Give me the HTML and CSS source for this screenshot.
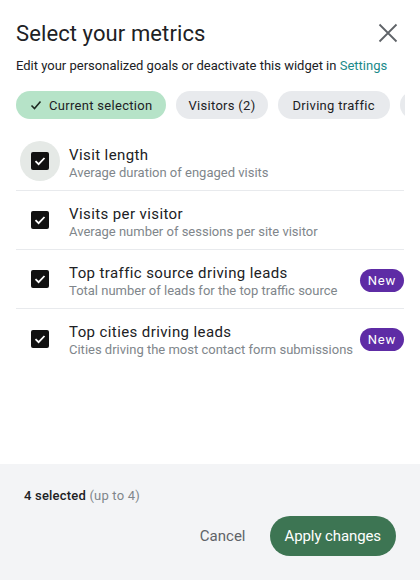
FILE: index.html
```html
<!DOCTYPE html>
<html>
<head>
<meta charset="utf-8">
<link rel="stylesheet" href="styles.css">
</head>
<body>
<div class="dialog">
  <div class="content">
    <div class="header">
      <h1 class="title">Select your metrics</h1>
      <button class="close" aria-label="Close">
        <svg width="24" height="24" viewBox="0 0 24 24"><path d="M3.5 3.5L20.5 20.5M20.5 3.5L3.5 20.5" stroke="#5f6368" stroke-width="1.8" fill="none"/></svg>
      </button>
    </div>
    <p class="subtitle">Edit your personalized goals or deactivate this widget in <a class="link">Settings</a></p>
    <div class="chips">
      <span class="chip chip-active"><svg width="14" height="14" viewBox="0 0 14 14"><path d="M2.5 7.5L5.5 10.5L11.5 3.5" stroke="#1f2a22" stroke-width="1.6" fill="none"/></svg>Current selection</span>
      <span class="chip chip-visitors">Visitors (2)</span>
      <span class="chip chip-traffic">Driving traffic</span>
      <span class="chip chip-more"></span>
    </div>
    <ul class="list">
      <li class="row">
        <span class="cb-wrap focused"><span class="cb"><svg width="14" height="14" viewBox="0 0 14 14"><path d="M2.5 7.2L5.6 10.2L11.5 4" stroke="#fff" stroke-width="1.8" fill="none"/></svg></span></span>
        <div class="text"><div class="name">Visit length</div><div class="desc">Average duration of engaged visits</div></div>
      </li>
      <li class="row">
        <span class="cb-wrap"><span class="cb"><svg width="14" height="14" viewBox="0 0 14 14"><path d="M2.5 7.2L5.6 10.2L11.5 4" stroke="#fff" stroke-width="1.8" fill="none"/></svg></span></span>
        <div class="text"><div class="name">Visits per visitor</div><div class="desc">Average number of sessions per site visitor</div></div>
      </li>
      <li class="row">
        <span class="cb-wrap"><span class="cb"><svg width="14" height="14" viewBox="0 0 14 14"><path d="M2.5 7.2L5.6 10.2L11.5 4" stroke="#fff" stroke-width="1.8" fill="none"/></svg></span></span>
        <div class="text"><div class="name">Top traffic source driving leads</div><div class="desc">Total number of leads for the top traffic source</div></div>
        <span class="badge">New</span>
      </li>
      <li class="row">
        <span class="cb-wrap"><span class="cb"><svg width="14" height="14" viewBox="0 0 14 14"><path d="M2.5 7.2L5.6 10.2L11.5 4" stroke="#fff" stroke-width="1.8" fill="none"/></svg></span></span>
        <div class="text"><div class="name">Top cities driving leads</div><div class="desc">Cities driving the most contact form submissions</div></div>
        <span class="badge">New</span>
      </li>
    </ul>
  </div>
  <div class="footer">
    <div class="count"><b>4 selected</b> <span class="muted">(up to 4)</span></div>
    <div class="actions">
      <button class="btn-text">Cancel</button>
      <button class="btn-primary">Apply changes</button>
    </div>
  </div>
</div>
</body>
</html>
```
FILE: styles.css
```css
* { box-sizing: border-box; }
html, body { margin: 0; padding: 0; }
body {
  width: 420px;
  height: 580px;
  overflow: hidden;
  background: #fff;
  font-family: Roboto, "Noto Sans", sans-serif;
  color: #202124;
}
.dialog {
  display: flex;
  flex-direction: column;
  height: 580px;
}
.content {
  flex: 1;
  padding: 16px 16px 0 16px;
  overflow: hidden;
}
.header {
  display: flex;
  align-items: center;
  justify-content: space-between;
  height: 34px;
}
.title {
  margin: 0;
  font-size: 22px;
  font-weight: 400;
  color: #202124;
  letter-spacing: 0.1px;
}
.close {
  border: 0;
  background: none;
  padding: 0;
  margin-right: 4px;
  width: 24px;
  height: 24px;
  display: flex;
}
.subtitle {
  margin: 7px 0 0 0;
  font-size: 13px;
  line-height: 18px;
  color: #202124;
  letter-spacing: 0;
}
.link { color: #1a8a8a; }
.chips {
  display: flex;
  gap: 10px;
  margin-top: 16px;
  margin-right: -1px;
  white-space: nowrap;
  overflow: hidden;
}
.chip {
  flex: none;
  display: inline-flex;
  align-items: center;
  gap: 6px;
  height: 28px;
  padding: 0 14px;
  border-radius: 14px;
  background: #e8eaed;
  font-size: 13px;
  letter-spacing: 0.3px;
  color: #202124;
}
.chip-active {
  background: #b6e3c8;
  padding-left: 13px;
}
.chip-visitors { padding: 0 12px; }
.chip-traffic { padding: 0 15px; }
.chip-more { width: 40px; }
.list {
  list-style: none;
  margin: 13px 0 0 0;
  padding: 0;
}
.row {
  display: flex;
  align-items: center;
  height: 59px;
  border-bottom: 1px solid #e8eaed;
}
.row:last-child { border-bottom: 0; }
.cb-wrap {
  width: 40px;
  height: 40px;
  margin-left: 4px;
  border-radius: 50%;
  display: flex;
  align-items: center;
  justify-content: center;
  flex: none;
}
.cb-wrap.focused { background: #e5e9e6; }
.cb {
  width: 18px;
  height: 18px;
  border-radius: 2px;
  background: #111;
  display: flex;
  align-items: center;
  justify-content: center;
}
.text {
  flex: 1;
  margin-left: 9px;
  padding-top: 4px;
  min-width: 0;
}
.name {
  font-size: 15px;
  line-height: 19px;
  color: #202124;
  letter-spacing: 0.4px;
}
.desc {
  font-size: 13px;
  line-height: 16px;
  color: #80868b;
  letter-spacing: 0;
}
.badge {
  flex: none;
  background: #5e2ca5;
  color: #fff;
  font-size: 13px;
  font-weight: 400;
  height: 23px;
  line-height: 23px;
  padding: 0 8px;
  border-radius: 12px;
  letter-spacing: 0.8px;
  margin-top: 2px;
}
.footer {
  height: 116px;
  background: #f3f4f6;
  padding: 24px 24px 0 24px;
}
.count {
  font-size: 13px;
  letter-spacing: 0.2px;
}
.count b { font-weight: 500; color: #202124; }
.muted { color: #80868b; }
.actions {
  display: flex;
  justify-content: flex-end;
  align-items: center;
  gap: 24px;
  margin-top: 13px;
}
.btn-text {
  border: 0;
  background: none;
  font-family: inherit;
  font-size: 15px;
  color: #5f6368;
  padding: 0;
}
.btn-primary {
  border: 0;
  font-family: inherit;
  font-size: 15px;
  letter-spacing: -0.1px;
  color: #fff;
  background: #3d7553;
  height: 40px;
  padding: 0 15px;
  border-radius: 20px;
}
```
